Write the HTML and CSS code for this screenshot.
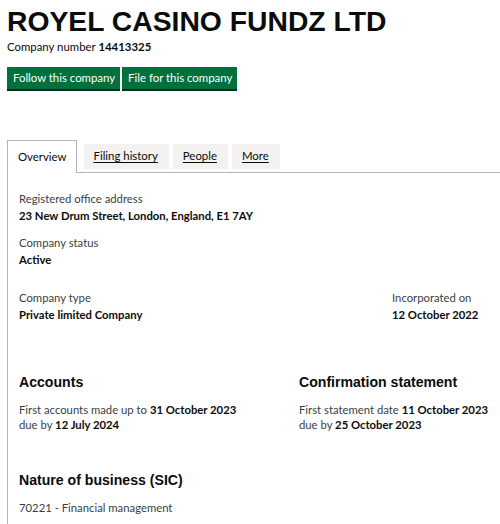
FILE: index.html
```html
<!DOCTYPE html>
<html>
<head>
<meta charset="utf-8">
<link rel="stylesheet" href="styles.css">
</head>
<body>
<div class="page">
  <h1 class="title">ROYEL CASINO FUNDZ LTD</h1>
  <p class="company-number">Company number <strong>14413325</strong></p>
  <div class="actions">
    <a class="button">Follow this company</a>
    <a class="button">File for this company</a>
  </div>
  <div class="tabs">
    <ul class="tab-list">
      <li class="tab active">Overview</li>
      <li class="tab"><a>Filing history</a></li>
      <li class="tab"><a>People</a></li>
      <li class="tab"><a>More</a></li>
    </ul>
    <div class="panel">
      <dl class="field">
        <dt>Registered office address</dt>
        <dd>23 New Drum Street, London, England, E1 7AY</dd>
      </dl>
      <dl class="field">
        <dt>Company status</dt>
        <dd>Active</dd>
      </dl>
      <div class="row row-type">
        <dl class="field">
          <dt>Company type</dt>
          <dd>Private limited Company</dd>
        </dl>
        <dl class="field">
          <dt>Incorporated on</dt>
          <dd>12 October 2022</dd>
        </dl>
      </div>
      <div class="row row-dates">
        <div class="section">
          <h2 class="heading">Accounts</h2>
          <p class="text">First accounts made up to <strong>31 October 2023</strong><br>due by <strong>12 July 2024</strong></p>
        </div>
        <div class="section">
          <h2 class="heading">Confirmation statement</h2>
          <p class="text">First statement date <strong>11 October 2023</strong><br>due by <strong>25 October 2023</strong></p>
        </div>
      </div>
      <div class="section">
        <h2 class="heading">Nature of business (SIC)</h2>
        <p class="text">70221 - Financial management</p>
      </div>
    </div>
  </div>
</div>
</body>
</html>
```

FILE: styles.css
```css
html, body {
  margin: 0;
  padding: 0;
  background: #ffffff;
}
body {
  font-family: "Lato", "Noto Sans", sans-serif;
  color: #0b0c0c;
  overflow: hidden;
}
.page {
  padding: 5px 0 0 7px;
}
.title {
  font-family: "Liberation Sans", Arial, sans-serif;
  font-weight: 700;
  font-size: 28.3px;
  line-height: 32px;
  margin: 0;
}
.company-number {
  margin: 2px 0 0 0;
  font-size: 11.4px;
  line-height: 16px;
}
.company-number strong {
  font-weight: 700;
}
.actions {
  display: flex;
  gap: 2px;
  margin-top: 12px;
}
.button {
  display: block;
  background: #00703c;
  color: #ffffff;
  font-size: 11.4px;
  line-height: 16px;
  padding: 3px 5px 3px 6px;
  box-shadow: 0 2px 0 #002d18;
}
.tabs {
  margin-top: 51px;
}
.tab-list {
  list-style: none;
  margin: 0;
  padding: 0;
  display: flex;
  align-items: flex-start;
  gap: 4px;
  border-bottom: 1px solid #b1b4b6;
  height: 32px;
}
.tab {
  font-size: 11.4px;
  line-height: 16px;
  background: #f3f2f1;
  margin-top: 4px;
  padding: 4px 11px 5px 10px;
}
.tab a {
  text-decoration: underline;
  text-underline-offset: 2px;
  color: #0b0c0c;
}
.tab.active {
  background: #ffffff;
  border: 1px solid #b1b4b6;
  border-bottom: 0;
  margin-top: 0;
  padding: 8px 9px 8px 10px;
  margin-right: 3px;
  position: relative;
  z-index: 1;
}
.panel {
  border-left: 1px solid #b1b4b6;
  padding: 17px 0 20px 11px;
}
.field {
  margin: 0 0 10px 0;
}
.field dt {
  font-size: 11.3px;
  line-height: 17px;
  color: #383f43;
}
.field dd {
  margin: 0;
  font-size: 11.3px;
  line-height: 17px;
  font-weight: 700;
}
.row {
  display: grid;
}
.row-type {
  grid-template-columns: 373px auto;
  margin-top: 21px;
}
.row-dates {
  grid-template-columns: 280px auto;
  margin-top: 39px;
}
.heading {
  font-family: "Liberation Sans", Arial, sans-serif;
  font-weight: 700;
  font-size: 14.1px;
  line-height: 20px;
  margin: 0 0 10px 0;
}
.text {
  margin: 0;
  font-size: 11.3px;
  line-height: 15px;
  color: #383f43;
}
.text strong {
  color: #0b0c0c;
}
.row-dates .section {
  margin-bottom: 38px;
}
```
